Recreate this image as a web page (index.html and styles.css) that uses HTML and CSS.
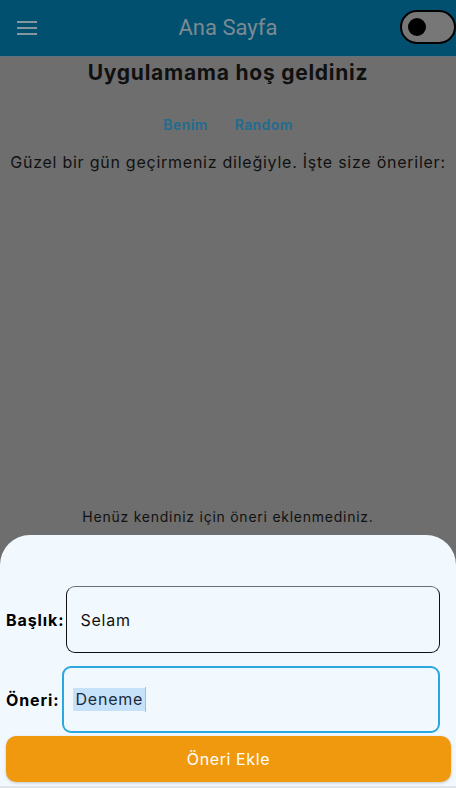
FILE: index.html
```html
<!DOCTYPE html>
<html lang="tr">
<head>
<meta charset="utf-8">
<title>Ana Sayfa</title>
<link rel="stylesheet" href="styles.css">
</head>
<body>
<div class="app">
  <header class="appbar">
    <div class="appbar-left">
      <button class="menu-btn" aria-label="Menü">
        <svg width="20" height="16" viewBox="0 0 20 16"><rect x="0" y="1" width="20" height="2" fill="#8596a0"/><rect x="0" y="7" width="20" height="2" fill="#8596a0"/><rect x="0" y="13" width="20" height="2" fill="#8596a0"/></svg>
      </button>
    </div>
    <h1 class="appbar-title">Ana Sayfa</h1>
    <div class="appbar-right">
      <div class="toggle"><span class="knob"></span></div>
    </div>
  </header>
  <main class="content">
    <h2 class="welcome">Uygulamama hoş geldiniz</h2>
    <nav class="tabs">
      <span class="tab">Benim</span>
      <span class="tab">Random</span>
    </nav>
    <p class="greeting">Güzel bir gün geçirmeniz dileğiyle. İşte size öneriler:</p>
    <div class="spacer"></div>
    <p class="empty">Henüz kendiniz için öneri eklenmediniz.</p>
  </main>
  <section class="sheet">
    <div class="row">
      <label class="label">Başlık:</label>
      <div class="field field-title"><span>Selam</span></div>
    </div>
    <div class="row row-2">
      <label class="label">Öneri:</label>
      <div class="field field-focus"><span class="sel">Deneme</span><span class="caret"></span></div>
    </div>
    <button class="submit">Öneri Ekle</button>
  </section>
</div>
</body>
</html>
```
FILE: styles.css
```css
* { box-sizing: border-box; }
html, body { margin: 0; padding: 0; }
body {
  width: 456px;
  height: 788px;
  overflow: hidden;
  font-family: Inter, "Noto Sans", sans-serif;
  background: #6e6e6e;
}
.app {
  position: relative;
  width: 456px;
  height: 788px;
  display: flex;
  flex-direction: column;
}
.appbar {
  height: 57px;
  flex: none;
  background: #02506f;
  display: grid;
  grid-template-columns: 1fr auto 1fr;
  align-items: center;
  border-bottom: 1px solid #5f7480;
}
.appbar-left {
  padding-left: 17px;
  display: flex;
}
.appbar-right {
  display: flex;
  justify-content: flex-end;
}
.menu-btn {
  background: none;
  border: 0;
  padding: 0;
  width: 20px;
  height: 16px;
  display: flex;
  margin-top: -1px;
}
.appbar-title {
  margin: -2px 0 0;
  font-family: Roboto, sans-serif;
  font-weight: 400;
  font-size: 22px;
  color: #7d8a91;
}
.toggle {
  width: 56px;
  height: 34px;
  border: 2px solid #000;
  border-radius: 17px;
  background: #777;
  display: flex;
  align-items: center;
  padding-left: 6px;
  margin-top: -3px;
}
.knob {
  width: 18px;
  height: 18px;
  border-radius: 50%;
  background: #000;
}
.content {
  flex: 1;
  display: flex;
  flex-direction: column;
  align-items: center;
  background: #6e6e6e;
  letter-spacing: 0.75px;
}
.welcome {
  margin: 3px 0 0;
  font-size: 21px;
  font-weight: 700;
  letter-spacing: 0.75px;
  color: #101010;
  line-height: 26px;
}
.tabs {
  margin-top: 30px;
  display: flex;
  gap: 27px;
}
.tab {
  font-size: 14px;
  font-weight: 600;
  letter-spacing: 0.4px;
  color: #1f6b90;
  line-height: 18px;
}
.greeting {
  margin: 18px 0 0;
  font-size: 16px;
  color: #111;
  line-height: 20px;
}
.spacer { flex: 1; }
.empty {
  margin: 0 0 262px;
  font-size: 14px;
  color: #111;
  line-height: 18px;
}
.sheet {
  position: absolute;
  left: 0;
  right: 0;
  bottom: 0;
  height: 253px;
  background: #f2f9fe;
  border-radius: 30px 30px 0 0;
  padding: 51px 0 0;
  display: flex;
  flex-direction: column;
  border-bottom: 2px solid #dfe4e7;
  letter-spacing: 0.75px;
}
.row {
  display: flex;
  align-items: center;
  gap: 2px;
  padding: 0 16px 0 6px;
}
.row-2 { margin-top: 13px; }
.label {
  font-size: 16px;
  font-weight: 700;
  letter-spacing: 0.9px;
  color: #000;
}
.field {
  flex: 1;
  height: 67px;
  border-radius: 9px;
  display: flex;
  align-items: center;
  font-size: 16px;
  color: #111;
}
.field-title {
  border: 1px solid #111;
  border-top-color: #6e6e6e;
  padding-left: 13px;
}
.field-focus {
  border: 2px solid #2aa7df;
  padding-left: 9px;
  color: #1a2a3a;
}
.sel {
  background: #c6e1fa;
  padding: 1px 2px 2px 3px;
  line-height: 20px;
}
.caret {
  width: 1px;
  height: 25px;
  background: #8fc3ea;
}
.submit {
  margin: 3px 5px 0 6px;
  height: 46px;
  border: 0;
  border-radius: 10px;
  background: #f0990e;
  color: #fff;
  font-family: Inter, "Noto Sans", sans-serif;
  font-size: 16px;
  letter-spacing: 0.6px;
  box-shadow: 0 1px 3px rgba(0,0,0,0.2);
}
```
